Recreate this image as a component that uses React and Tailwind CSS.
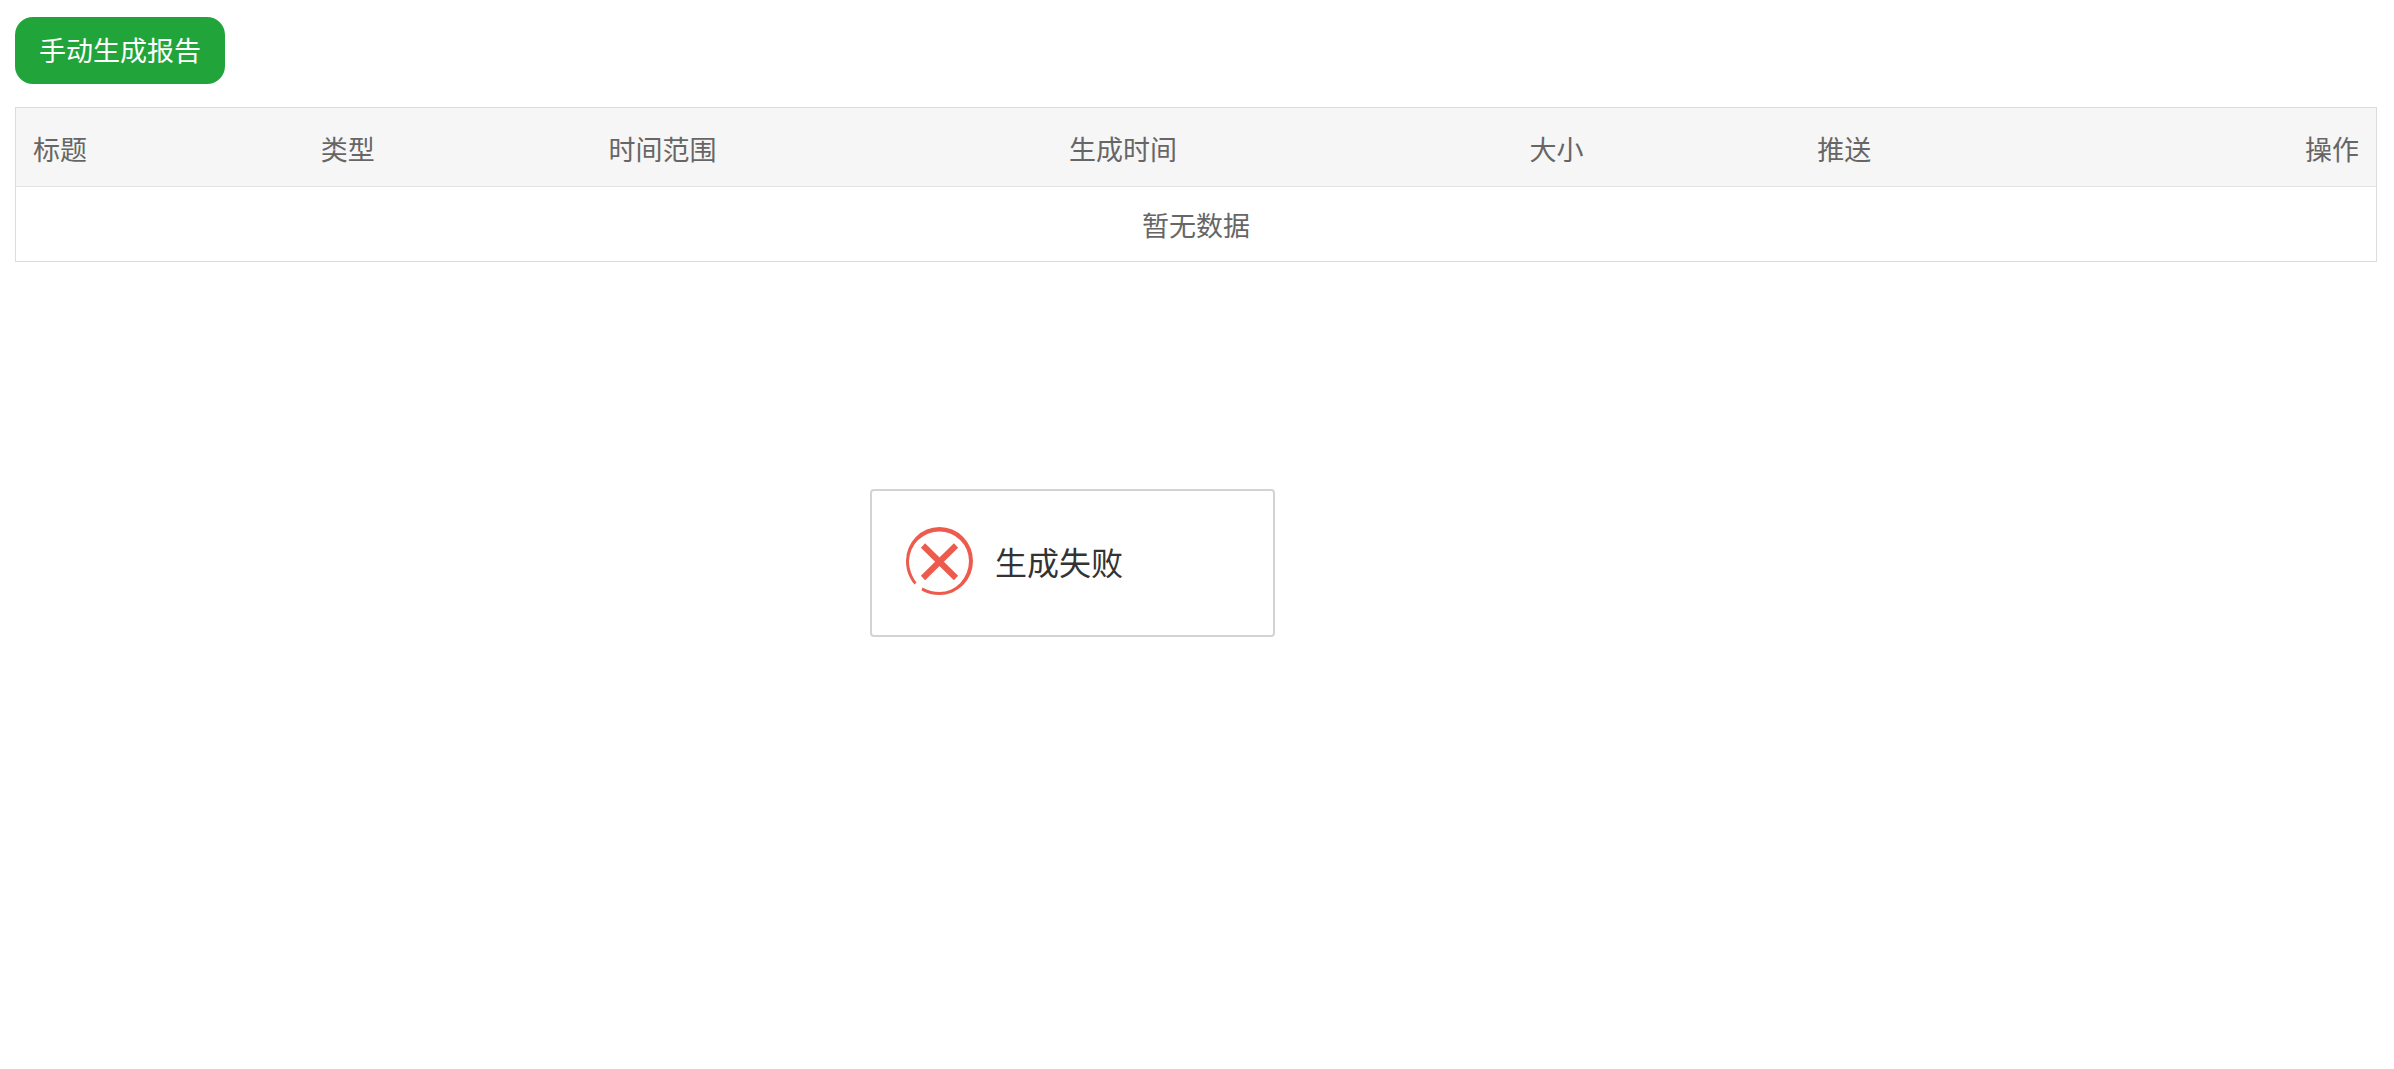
import React from 'react';

const columns = [
  { title: '标题', width: 'w-5/41' },
  { title: '类型', width: 'w-5/41' },
  { title: '时间范围', width: 'w-8/41' },
  { title: '生成时间', width: 'w-8/41' },
  { title: '大小', width: 'w-5/41' },
  { title: '推送', width: 'w-5/41' },
  { title: '操作', width: 'w-auto', align: 'text-right' },
];

function ReportTable() {
  return (
    <div className="border border-[#dcdcdc]">
      <table className="w-full table-fixed border-collapse text-[27px] leading-[40px] text-[#666]">
        <thead>
          <tr className="border-b border-[#e2e2e2] bg-[#f6f6f6]">
            {columns.map((col) => (
              <th
                key={col.title}
                className={`px-[17px] pt-[21px] pb-[17px] font-normal ${col.width} ${col.align || 'text-left'}`}
              >
                {col.title}
              </th>
            ))}
          </tr>
        </thead>
        <tbody>
          <tr>
            <td colSpan={columns.length} className="px-[17px] pt-[18px] pb-4 text-center">
              暂无数据
            </td>
          </tr>
        </tbody>
      </table>
    </div>
  );
}

function FailIcon() {
  return (
    <svg className="h-[68px] w-[67px] shrink-0" viewBox="0 0 67 68" fill="none" aria-hidden="true">
      {/* ring with a gap at the lower left, thicker on the upper right */}
      <path
        fill="#ec5b4c"
        fillRule="evenodd"
        d="M33.500 0A33.500 34 0 0 1 33.500 68C27 68 21 66.500 15.500 63.500L16.500 60.500C22 63.500 28 65 33.500 65A29.500 31 0 0 0 63 34A29.500 29.500 0 0 0 33.500 4.500A30.500 30 0 0 0 3 34C3 42 6 49.500 10.500 55.500L8.500 57.500C3 51 0 43 0 34A33.500 34 0 0 1 33.500 0Z"
      />
      <path stroke="#ec5b4c" strokeWidth="6" d="M17 18.500L50 51M50 18.500L17 51" />
    </svg>
  );
}

function Toast({ message }) {
  return (
    <div
      role="alert"
      className="fixed top-[489px] left-[870px] flex w-[405px] items-center gap-[22px] rounded border-2 border-[#d3d3d3] bg-white px-[34px] pt-9 pb-10"
    >
      <FailIcon />
      <span className="text-[32px] leading-[48px] text-[#333]">{message}</span>
    </div>
  );
}

export default function App() {
  return (
    <div className="pt-[17px] pr-[17px] pl-[15px] font-['Noto_Sans_CJK_SC',sans-serif]">
      <button
        type="button"
        className="mb-[23px] block rounded-[18px] bg-[#21a53a] px-6 pt-[13px] pb-[14px] text-[27px] leading-[40px] text-white"
      >
        手动生成报告
      </button>
      <ReportTable />
      <Toast message="生成失败" />
    </div>
  );
}
